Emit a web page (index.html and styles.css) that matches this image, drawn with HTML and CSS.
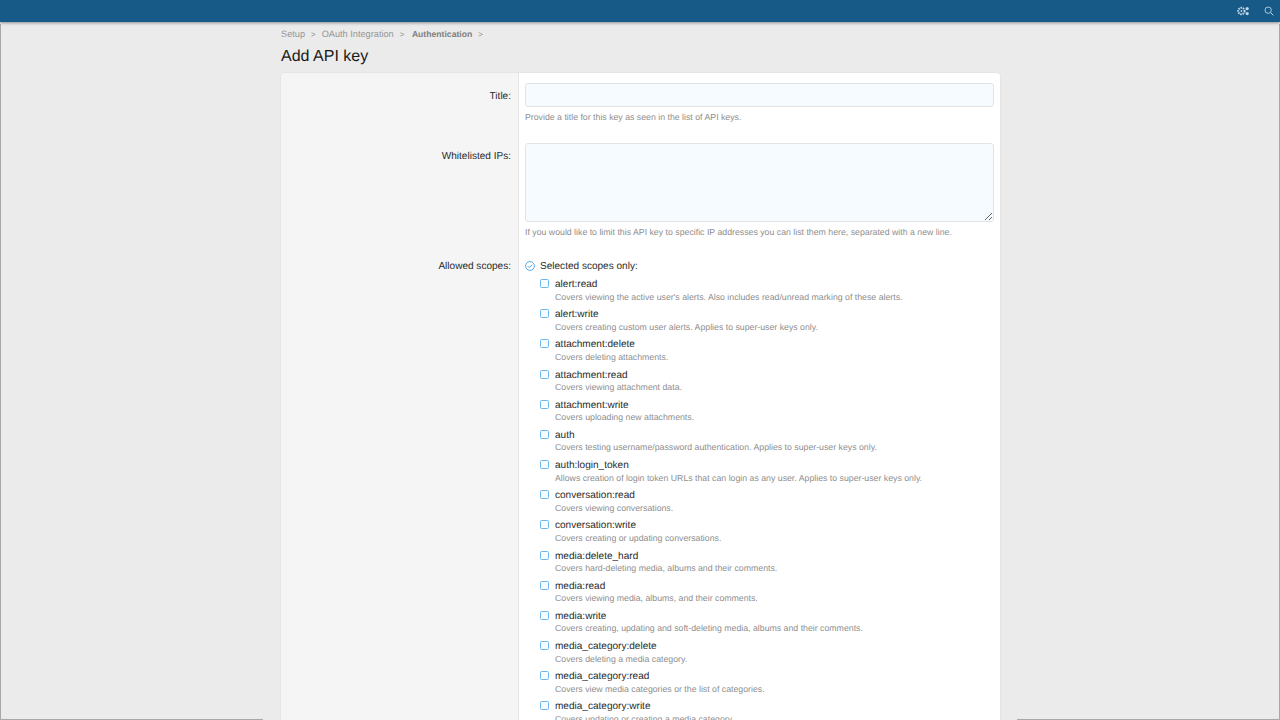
FILE: index.html
```html
<!DOCTYPE html>
<html lang="en">
<head>
<meta charset="utf-8">
<title>Add API key</title>
<link rel="stylesheet" href="styles.css">
</head>
<body>
<header class="topbar">
  <svg class="icon cogs" viewBox="0 0 12 10" width="12" height="10" aria-hidden="true">
    <circle cx="4.4" cy="5" r="3.2" fill="none" stroke="#c2d6e4" stroke-width="2" stroke-dasharray="1.5 0.8"/>
    <circle cx="4.4" cy="5" r="0.9" fill="#c2d6e4"/>
    <circle cx="10.2" cy="2.6" r="1.6" fill="#c2d6e4"/>
    <circle cx="10.2" cy="7.6" r="1.6" fill="#c2d6e4"/>
  </svg>
  <svg class="icon search" viewBox="0 0 12 12" width="10" height="10" aria-hidden="true">
    <circle cx="5" cy="5" r="3.8" fill="none" stroke="#c9dbe8" stroke-width="1"/>
    <path d="M8 8l3.2 3.2" stroke="#c9dbe8" stroke-width="1.2" fill="none"/>
  </svg>
</header>
<main class="page">
  <nav class="crumbs">
    <span>Setup</span><span class="sep">&gt;</span>
    <span>OAuth Integration</span><span class="sep">&gt;</span>
    <span class="strong">Authentication</span><span class="sep">&gt;</span>
  </nav>
  <h1 class="title">Add API key</h1>
  <form class="card">
    <div class="row row-title">
      <label class="label">Title:</label>
      <div class="field">
        <input class="input" type="text">
        <p class="hint">Provide a title for this key as seen in the list of API keys.</p>
      </div>
    </div>
    <div class="row row-ips">
      <label class="label">Whitelisted IPs:</label>
      <div class="field">
        <textarea class="input area"></textarea>
        <p class="hint">If you would like to limit this API key to specific IP addresses you can list them here, separated with a new line.</p>
      </div>
    </div>
    <div class="row row-scopes">
      <label class="label">Allowed scopes:</label>
      <div class="field">
        <div class="radio">
          <svg class="radio-mark" viewBox="0 0 10 10" width="10" height="10" aria-hidden="true">
            <circle cx="5" cy="5" r="4.4" fill="none" stroke="#47a7eb" stroke-width="0.9"/>
            <path d="M2.9 5.1l1.5 1.5 2.8-2.9" fill="none" stroke="#47a7eb" stroke-width="0.9"/>
          </svg>
          <span>Selected scopes only:</span>
        </div>
        <ul class="scopes">
          <li><i class="box"></i><div><b>alert:read</b><small>Covers viewing the active user's alerts. Also includes read/unread marking of these alerts.</small></div></li>
          <li><i class="box"></i><div><b>alert:write</b><small>Covers creating custom user alerts. Applies to super-user keys only.</small></div></li>
          <li><i class="box"></i><div><b>attachment:delete</b><small>Covers deleting attachments.</small></div></li>
          <li><i class="box"></i><div><b>attachment:read</b><small>Covers viewing attachment data.</small></div></li>
          <li><i class="box"></i><div><b>attachment:write</b><small>Covers uploading new attachments.</small></div></li>
          <li><i class="box"></i><div><b>auth</b><small>Covers testing username/password authentication. Applies to super-user keys only.</small></div></li>
          <li><i class="box"></i><div><b>auth:login_token</b><small>Allows creation of login token URLs that can login as any user. Applies to super-user keys only.</small></div></li>
          <li><i class="box"></i><div><b>conversation:read</b><small>Covers viewing conversations.</small></div></li>
          <li><i class="box"></i><div><b>conversation:write</b><small>Covers creating or updating conversations.</small></div></li>
          <li><i class="box"></i><div><b>media:delete_hard</b><small>Covers hard-deleting media, albums and their comments.</small></div></li>
          <li><i class="box"></i><div><b>media:read</b><small>Covers viewing media, albums, and their comments.</small></div></li>
          <li><i class="box"></i><div><b>media:write</b><small>Covers creating, updating and soft-deleting media, albums and their comments.</small></div></li>
          <li><i class="box"></i><div><b>media_category:delete</b><small>Covers deleting a media category.</small></div></li>
          <li><i class="box"></i><div><b>media_category:read</b><small>Covers view media categories or the list of categories.</small></div></li>
          <li><i class="box"></i><div><b>media_category:write</b><small>Covers updating or creating a media category.</small></div></li>
        </ul>
      </div>
    </div>
  </form>
</main>
</body>
</html>
```
FILE: styles.css
```css
* { box-sizing: border-box; }
html, body { margin: 0; height: 720px; overflow: hidden; }
body {
  position: relative;
  background: #ebebeb;
  font-family: "Liberation Sans", Arial, sans-serif;
  font-size: 10.05px;
  color: #2b2b2b;
  text-rendering: geometricPrecision;
}
body::before {
  content: "";
  position: absolute;
  inset: 24px 0 0 0;
  border-left: 1px solid #a8a8a8;
  border-right: 1px solid #a8a8a8;
  pointer-events: none;
}
body::after {
  content: "";
  position: absolute;
  left: 0; right: 0; bottom: 0;
  height: 1px;
  background: linear-gradient(to right, #a8a8a8 263px, transparent 263px, transparent 1017px, #a8a8a8 1017px);
  z-index: 2;
}
.topbar {
  position: relative;
  z-index: 1;
  height: 22px;
  background: #185a87;
  box-shadow: 0 1px 3px rgba(0,0,0,.4);
  display: flex;
  align-items: center;
  justify-content: flex-end;
  gap: 15px;
  padding-right: 6px;
}
.page { width: 720px; margin-left: 280px; position: relative; }
.crumbs {
  display: flex;
  align-items: center;
  height: 24px;
  padding-left: 1px;
  color: #949494;
  font-size: 9.2px;
}
.sep { margin: 0 6px; font-size: 8px; }
.sep:first-of-type { margin-left: 5.5px; margin-right: 5.5px; }
.strong { font-weight: 700; font-size: 8.65px; color: #808080; margin-left: 1.5px; }
.title {
  margin: 0;
  height: 27px;
  padding: 0.5px 0 0 1px;
  font-size: 16px;
  line-height: 19px;
  font-weight: 400;
  color: #1a1a1a;
}
.card {
  margin-left: 1px;
  background: #fff;
  border-radius: 3px 3px 0 0;
  box-shadow: 0 0 2px rgba(0,0,0,.1);
  overflow: hidden;
}
.row { display: flex; }
.label {
  flex: 0 0 238px;
  background: #f5f5f5;
  border-right: 1px solid #e4e4e4;
  text-align: right;
  padding-right: 7px;
}
.field { flex: 1; padding: 0 6.5px 0 6px; }
.row-title .label { padding-top: 17.5px; }
.row-title .field { padding-top: 10px; height: 70px; }
.row-ips .label { padding-top: 7.5px; }
.row-ips .field { height: 113px; }
.row-scopes .label { padding-top: 4.5px; }
.row-scopes .field { padding-top: 3.5px; height: 600px; }
.input {
  display: block;
  width: 100%;
  height: 24px;
  background: #f6fbff;
  border: 1px solid #e3e3e3;
  border-radius: 3px;
  outline: 0;
  padding: 0;
  margin: 0;
}
.area { height: 79px; resize: vertical; }
.hint { margin: 3.5px 0 0; font-size: 8.75px; line-height: 12px; color: #8e8e8e; }
.row-ips .hint { margin-top: 4px; }
.radio { display: flex; align-items: center; gap: 5px; height: 13px; }
.radio-mark { flex: none; }
.scopes { list-style: none; margin: 5.5px 0 0 15px; padding: 0; }
.scopes li { display: flex; gap: 6px; height: 30.18px; padding-top: 1px; }
.box {
  flex: none;
  width: 9px;
  height: 9px;
  border: 1px solid #6cb9ef;
  border-radius: 1.5px;
  background: #f9fcff;
}
.scopes b { display: block; font-weight: 400; line-height: 11.5px; }
.scopes small { display: block; font-size: 8.75px; line-height: 13px; color: #8e8e8e; }
```
